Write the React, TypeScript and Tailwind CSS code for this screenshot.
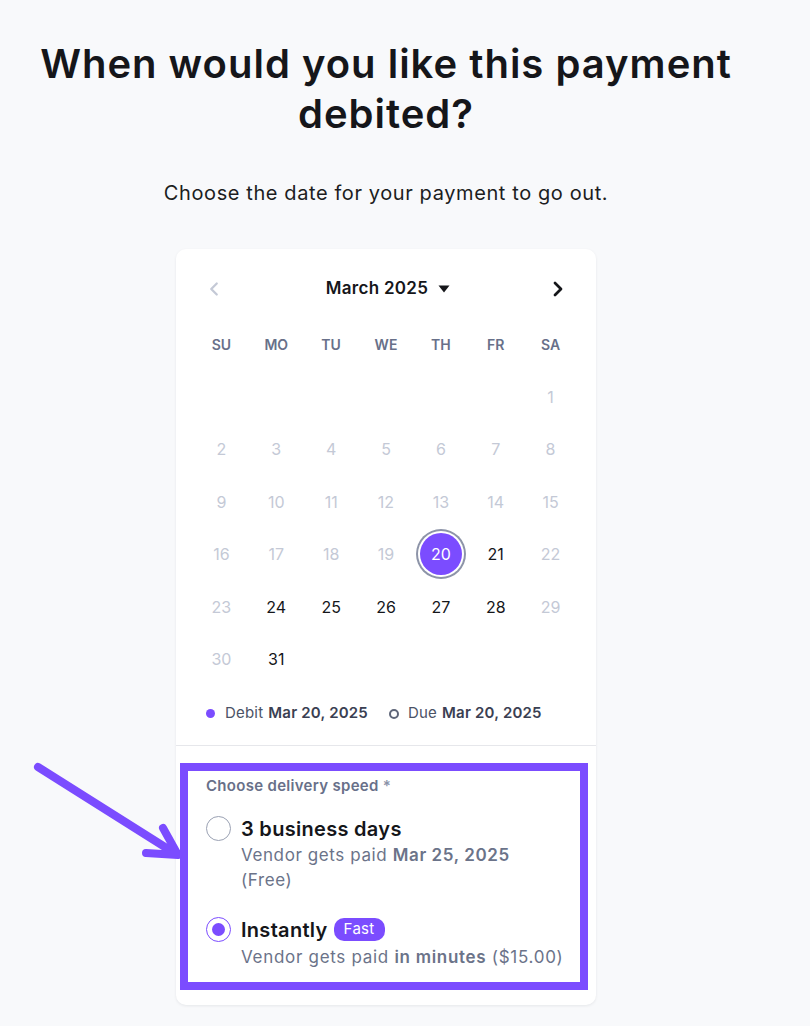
import { ChevronLeft, ChevronRight } from "lucide-react";

const WEEKDAYS = ["SU", "MO", "TU", "WE", "TH", "FR", "SA"];

// March 2025 starts on a Saturday
const DAYS: (number | null)[] = [
    ...Array(6).fill(null),
    ...Array.from({ length: 31 }, (_, i) => i + 1),
];

const AVAILABLE = [21, 24, 25, 26, 27, 28, 31];
const SELECTED = 20;

function DayCell({ day }: { day: number | null }) {
    if (day === null) return <div className="h-[52.5px]" />;

    if (day === SELECTED) {
        return (
            <div className="h-[52.5px] flex items-center justify-center">
                <div className="w-[42px] h-[42px] rounded-full bg-[#7b4cff] text-white text-[16px] flex items-center justify-center ring-2 ring-[#8d94a8] ring-offset-[2px] ring-offset-white">
                    {day}
                </div>
            </div>
        );
    }

    const enabled = AVAILABLE.includes(day);
    return (
        <div
            className={`h-[52.5px] flex items-center justify-center text-[16px] ${
                enabled ? "text-[#15161a]" : "text-[#c4c9d6]"
            }`}
        >
            {day}
        </div>
    );
}

function Arrow() {
    return (
        <svg
            className="absolute left-0 top-[750px] pointer-events-none"
            width="200"
            height="130"
            viewBox="0 0 200 130"
            fill="none"
            stroke="#7b4cff"
            strokeWidth="8"
            strokeLinecap="round"
            strokeLinejoin="round"
        >
            <path d="M38 17 L176 104" />
            <path d="M163 78 L178 105 L146 103" />
        </svg>
    );
}

export default function App() {
    return (
        <div
            className="relative min-h-[1026px] w-full bg-[#f8f9fb] text-[#15161a]"
            style={{ fontFamily: "Inter, 'Noto Sans', sans-serif" }}
        >
            <Arrow />
            <div className="w-[772px] flex flex-col items-center pt-[39px]">
                <h1 className="text-center text-[40px] leading-[50px] font-semibold tracking-[1px] w-[740px]">
                    When would you like this payment debited?
                </h1>
                <p className="mt-[40px] text-[20px] leading-[28px] tracking-[0.6px] text-[#1c1d21]">
                    Choose the date for your payment to go out.
                </p>

                <div className="mt-[42px] w-[420px] bg-white rounded-[10px] shadow-[0_1px_3px_rgba(16,24,40,0.08)] pt-[24px] pb-[15px]">
                    <div className="px-[18px] h-[32px] flex items-center justify-between">
                        <button className="w-[40px] flex items-center justify-center text-[#c4c9d6]">
                            <ChevronLeft className="w-[22px] h-[22px]" strokeWidth={2.5} />
                        </button>
                        <div className="flex items-center gap-[10px] text-[17px] font-semibold tracking-[0.3px] pl-[4px]">
                            <span>March 2025</span>
                            <svg width="12" height="8" viewBox="0 0 12 8">
                                <path d="M0.5 0.5 H11.5 L6 7.5 Z" fill="#15161a" />
                            </svg>
                        </div>
                        <button className="w-[40px] flex items-center justify-center text-[#15161a]">
                            <ChevronRight className="w-[24px] h-[24px]" strokeWidth={2.75} />
                        </button>
                    </div>

                    <div className="px-[18px] mt-[13px] grid grid-cols-7">
                        {WEEKDAYS.map((d) => (
                            <div
                                key={d}
                                className="h-[52.5px] flex items-center justify-center text-[14px] font-semibold text-[#687089]"
                            >
                                {d}
                            </div>
                        ))}
                        {DAYS.map((d, i) => (
                            <DayCell key={i} day={d} />
                        ))}
                    </div>

                    <div className="mt-[16px] pb-[19px] px-[30px] flex items-center h-[24px] text-[15px] tracking-[0.2px] text-[#4b5266] box-content border-b border-[#e6e7eb]">
                        <span className="w-[9px] h-[9px] rounded-full bg-[#7b4cff]" />
                        <span className="ml-[10px]">Debit</span>
                        <span className="ml-[5px] font-semibold text-[#3a4052]">Mar 20, 2025</span>
                        <span className="ml-[21px] w-[10px] h-[10px] rounded-full border-2 border-[#5f6679]" />
                        <span className="ml-[9px]">Due</span>
                        <span className="ml-[5px] font-semibold text-[#3a4052]">Mar 20, 2025</span>
                    </div>

                    <div className="mt-[17px] ml-[4px] mr-[8px] border-[8px] border-[#7b4cff] pl-[18px] pr-[6px] pt-[5px] pb-[12px]">
                        <div className="text-[15px] leading-[20px] font-semibold tracking-[0.3px] text-[#687089]">
                            Choose delivery speed <span className="text-[#8a92a8]">*</span>
                        </div>

                        <div className="mt-[19px] flex gap-[10px]">
                            <div className="h-[28px] flex items-center">
                                <span className="w-[25px] h-[25px] rounded-full border border-[#9aa1b3] bg-white" />
                            </div>
                            <div>
                                <div className="text-[20px] leading-[28px] font-semibold tracking-[0.3px] text-[#15161a]">
                                    3 business days
                                </div>
                                <div className="text-[17px] leading-[25px] tracking-[0.6px] text-[#6b7389]">
                                    Vendor gets paid <span className="font-semibold">Mar 25, 2025</span>
                                    <br />
                                    (Free)
                                </div>
                            </div>
                        </div>

                        <div className="mt-[23px] flex gap-[10px]">
                            <div className="h-[28px] flex items-center">
                                <span className="w-[25px] h-[25px] rounded-full border-[1.5px] border-[#7b4cff] bg-white flex items-center justify-center">
                                    <span className="w-[13px] h-[13px] rounded-full bg-[#7b4cff]" />
                                </span>
                            </div>
                            <div>
                                <div className="flex items-center gap-[6px] h-[28px]">
                                    <span className="text-[20px] leading-[28px] font-semibold tracking-[0.3px] text-[#15161a]">
                                        Instantly
                                    </span>
                                    <span className="h-[23px] px-[10px] rounded-[10px] bg-[#7b4cff] text-white text-[15px] tracking-[0.3px] flex items-center">
                                        Fast
                                    </span>
                                </div>
                                <div className="text-[17px] leading-[26px] tracking-[0.7px] text-[#6b7389] whitespace-nowrap">
                                    Vendor gets paid <span className="font-semibold">in minutes</span> ($15.00)
                                </div>
                            </div>
                        </div>
                    </div>
                </div>
            </div>
        </div>
    );
}
